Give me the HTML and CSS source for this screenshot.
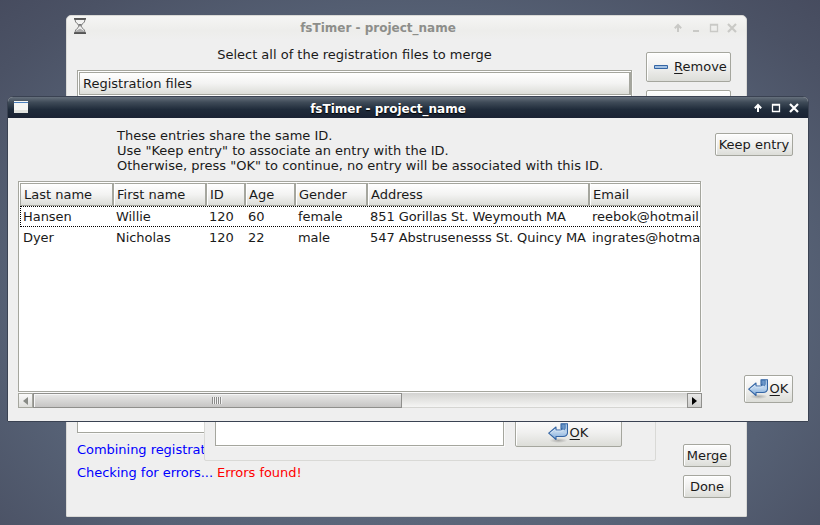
FILE: index.html
```html
<!DOCTYPE html>
<html lang="en">
<head>
<meta charset="utf-8">
<title>fsTimer - project_name</title>
<link rel="stylesheet" href="styles.css">
</head>
<body>
<svg width="0" height="0" class="defs">
  <defs>
    <linearGradient id="blue" x1="0" y1="0" x2="0" y2="1"><stop offset="0" stop-color="#a9c6e6"/><stop offset=".55" stop-color="#b9d2ec"/><stop offset="1" stop-color="#7ba7d8"/></linearGradient>
    <radialGradient id="shade"><stop offset="0" stop-color="#000" stop-opacity=".25"/><stop offset="1" stop-color="#000" stop-opacity="0"/></radialGradient>
    <symbol id="enter" viewBox="0 0 20 20">
      <ellipse cx="10.500" cy="17.500" rx="9" ry="2.500" fill="url(#shade)"/>
      <path d="M13 .8h6.500v8.700q0 4-4.500 4H8v3L.7 10.200 8 4v3h4.500q1.500 0 1.500-1.500H13z" fill="url(#blue)" stroke="#3465a4" stroke-width="1.100" stroke-linejoin="round"/>
      <path d="M13.500 1.300h3.700v3.700q0 1-.8 1.700l-2.400-.8z" fill="#6d98ca" stroke="#3465a4" stroke-width=".7"/>
      <path d="M2.500 10.200L7 6.300v1.800h6q2 0 3-1.300" fill="none" stroke="#dceaf8" stroke-width=".8"/>
    </symbol>
  </defs>
</svg>

<main class="desktop">
  <section class="window merge-window">
    <header class="titlebar">
      <svg class="app-icon" width="14" height="16" viewBox="0 0 14 16"><path d="M2 1.500c0 4 4 4.500 4 6.500s-4 2.500-4 6.500h10c0-4-4-4.500-4-6.500s4-2.500 4-6.500z" fill="#f2f2f1" stroke="#777"/><path d="M2.500 14c1-2.500 3-2 4.500-3.500 1.500 1.500 3.500 1 4.500 3.500z" fill="#aaa"/><path d="M5 6h4L7 8.500z" fill="#777"/><path d="M1 .9h12M1 15.100h12" stroke="#555" stroke-width="1.600"/></svg>
      <h1 class="title">fsTimer - project_name</h1>
      <svg class="controls" width="64" height="10" viewBox="0 0 64 10"><path d="M4 9V2M.8 5.300L4 2l3.200 3.300" fill="none" stroke="currentColor" stroke-width="2"/><path d="M19 7h6v2h-6z" fill="currentColor"/><path d="M36.500 1.500h7v7h-7zM36 2h8" fill="none" stroke="currentColor" stroke-width="1.300"/><path d="M54 1l8 8M62 1l-8 8" stroke="currentColor" stroke-width="2.200"/></svg>
    </header>
    <div class="merge-body">
      <div class="merge-main">
        <p class="prompt">Select all of the registration files to merge</p>
        <div class="list files"><div class="list-head">Registration files</div></div>
      </div>
      <div class="side">
        <button class="btn remove"><svg width="14" height="4" viewBox="0 0 14 4"><path d="M.5.5h13v3H.5z" fill="#a3c1e3" stroke="#3465a4"/></svg><span><u>R</u>emove</span></button>
        <button class="btn blank" aria-hidden="true"></button>
        <button class="btn merge">Merge</button>
        <button class="btn done">Done</button>
      </div>
    </div>
    <div class="log">
      <p>Combining registrat</p>
      <p>Checking for errors... <span class="error">Errors found!</span></p>
    </div>
  </section>

  <section class="window info-window">
    <div class="list info"></div>
    <button class="btn"><svg width="20" height="20"><use href="#enter"/></svg><span><u>O</u>K</span></button>
  </section>

  <section class="window entry-window">
    <header class="titlebar">
      <svg class="app-icon" width="14" height="12" viewBox="0 0 14 12"><path d="M0 0h14v12H0z" fill="#f4f4f2"/><path d="M0 1h14v1H0z" fill="#4a7fbd"/><path d="M0 9h14v3H0z" fill="#e1e3df"/></svg>
      <h1 class="title">fsTimer - project_name</h1>
      <svg class="controls" width="46" height="10" viewBox="0 0 46 10"><path d="M4 9V2M.8 5.300L4 2l3.200 3.300" fill="none" stroke="currentColor" stroke-width="2"/><path d="M18.500 1.500h7v7h-7zM18 2h8" fill="none" stroke="currentColor" stroke-width="1.300"/><path d="M36 1l8 8M44 1l-8 8" stroke="currentColor" stroke-width="2.200"/></svg>
    </header>
    <div class="entry-body">
      <div class="entry-main">
        <p class="message">These entries share the same ID.<br>Use "Keep entry" to associate an entry with the ID.<br>Otherwise, press "OK" to continue, no entry will be associated with this ID.</p>
        <div class="list entries">
          <div class="row head"><span>Last name</span><span>First name</span><span>ID</span><span>Age</span><span>Gender</span><span>Address</span><span>Email</span></div>
          <div class="row focused"><span>Hansen</span><span>Willie</span><span>120</span><span>60</span><span>female</span><span>851 Gorillas St. Weymouth MA</span><span>reebok@hotmail</span></div>
          <div class="row"><span>Dyer</span><span>Nicholas</span><span>120</span><span>22</span><span>male</span><span>547 Abstrusenesss St. Quincy MA</span><span>ingrates@hotma</span></div>
        </div>
        <div class="scrollbar">
          <div class="step"><svg width="5" height="8" viewBox="0 0 5 8"><path d="M5 0v8L0 4z" fill="#888a85"/></svg></div>
          <div class="thumb"><i></i></div>
          <div class="step end"><svg width="5" height="8" viewBox="0 0 5 8"><path d="M0 0v8l5-4z" fill="#000"/></svg></div>
        </div>
      </div>
      <div class="entry-side">
        <button class="btn keep">Keep entry</button>
        <button class="btn ok"><svg width="20" height="20"><use href="#enter"/></svg><span><u>O</u>K</span></button>
      </div>
    </div>
  </section>
</main>
</body>
</html>
```

FILE: styles.css
```css
* { box-sizing: border-box; }
body { margin: 0; font: 13px/15px "DejaVu Sans", sans-serif; color: #1a1a1a; }
p, h1 { margin: 0; }
svg { display: block; flex: none; }
.defs { position: absolute; }

.desktop {
  position: relative;
  width: 820px;
  height: 525px;
  overflow: hidden;
  background: radial-gradient(ellipse 600px 430px at 50% 58%, #667387 0%, #5f6a7e 35%, #566175 65%, #4b5265 87%, #404356 115%);
}
.window { position: absolute; background: #efefef; border: 1px solid #d9d9d6; }
.titlebar { display: flex; align-items: center; }
.title { flex: 1; text-align: center; font-size: 12px; line-height: 15px; font-weight: bold; }

.btn {
  display: flex;
  align-items: center;
  justify-content: center;
  padding: 0;
  font: inherit;
  color: inherit;
  white-space: nowrap;
  border: 1px solid #a5a69e;
  border-radius: 2px;
  background: linear-gradient(#fdfdfd, #f0f0ef 50%, #dcddd8);
  box-shadow: inset 1px 1px #fff;
}
u { text-underline-offset: 2px; text-decoration-thickness: 1px; text-decoration-skip-ink: none; }
.list { background: #fff; border: 1px solid #a5a69e; box-shadow: 1px 1px #fafafa; overflow: hidden; }

.merge-window { left: 66px; top: 15px; width: 681px; height: 502px; border-radius: 5px 5px 1px 1px; }
.merge-window .titlebar { height: 24px; padding: 0 8px 0 6px; color: #8d8e8a; background: linear-gradient(#f5f5f4, #ededeb 60%, #efefef); border-radius: 5px 5px 0 0; }
.merge-window .app-icon { margin-top: -4px; }
.merge-window .title { padding-right: 5px; }
.merge-window .controls { color: #c9c9c6; }
.merge-body { display: flex; justify-content: space-between; padding: 0 15px 0 10px; height: 393px; }
.merge-main { width: 555px; }
.prompt { text-align: center; padding-top: 7px; height: 30px; }
.files { height: 363px; padding: 1px 0 0 1px; }
.list-head { height: 23px; padding: 3px; border: 1px solid #a5a69e; border-right-width: 2px; background: linear-gradient(#fff, #f3f3f2 50%, #dcddd8); }
.side { width: 85px; padding-top: 12px; display: flex; flex-direction: column; align-items: flex-end; }
.side .btn { flex: none; }
.remove { width: 85px; height: 30px; gap: 6px; padding-left: 4px; }
.remove span { margin-top: -2px; }
.blank { width: 85px; height: 30px; margin-top: 8px; }
.merge { width: 48px; height: 23px; margin-top: 324px; }
.done { width: 48px; height: 23px; margin-top: 8px; }
.log { padding: 9px 10px; color: #00f; letter-spacing: -.04px; }
.log p + p { margin-top: 8px; }
.error { color: #f00; }

.info-window { left: 204px; top: 300px; width: 452px; height: 161px; display: flex; align-items: flex-end; gap: 11px; padding: 0 33px 13px 10px; border-radius: 0 0 2px 2px; }
.info { width: 289px; height: 100px; margin-bottom: 1px; }
.info-window .btn { width: 107px; height: 29px; gap: 2px; padding-right: 1px; }

.entry-window { left: 7px; top: 96px; width: 802px; height: 326px; border-color: #3a4252; border-radius: 6px 6px 1px 1px; }
.entry-window .titlebar { height: 21px; padding: 0 8px 0 6px; color: #fff; background: linear-gradient(#66707c, #3f4b58 25%, #1f2b3a 60%, #1a2233); border-radius: 5px 5px 0 0; }
.entry-window .app-icon { margin-top: -1px; }
.entry-window .title { padding-right: 6px; padding-top: 3px; text-shadow: 0 1px 1px #000; }
.entry-window .controls { margin-top: 1px; }
.entry-body { display: flex; justify-content: space-between; padding: 0 15px 0 10px; height: 303px; }
.entry-main { width: 684px; }
.message { padding: 10px 0 0 99px; height: 63px; white-space: nowrap; }
.entries { width: 683px; height: 211px; padding: 1px 0 0 1px; }
.row { display: grid; grid-template-columns: 93px 93px 39px 50px 72px 222px 1fr; height: 21px; white-space: nowrap; letter-spacing: -.04px; }
.row span { padding: 3px 0 0 3px; overflow: hidden; }
.row:not(.head) span:nth-child(6) { letter-spacing: -.07px; }
.row:not(.head) span:last-child { letter-spacing: 0; }
.head { height: 23px; grid-template-columns: 94px 93px 39px 50px 72px 222px 1fr; letter-spacing: 0; }
.head span { padding: 3px 0 0 2px; border: 1px solid #a5a69e; border-right-width: 2px; background: linear-gradient(#fff, #f3f3f2 50%, #dcddd8); border-left-color: #fff; }
.head span:first-child { padding-left: 3px; border-left-color: #a5a69e; }
.head span:last-child { border-right: 0; }
.focused { outline: 1px dotted #000; outline-offset: -1px; margin-right: -2px; }
.scrollbar { display: flex; height: 15px; margin-top: 1px; border-bottom: 1px solid #d5d5d2; background: linear-gradient(#d3d3d1, #f5f5f4); }
.step { width: 15px; height: 15px; display: flex; align-items: center; justify-content: center; border: 1px solid #a5a69e; background: linear-gradient(#fafafa, #dededb); }
.thumb { width: 369px; height: 15px; display: flex; align-items: center; justify-content: center; border: 1px solid #8f8f8c; background: linear-gradient(#e8e8e7, #c6c5c4); box-shadow: inset 1px 1px #f6f6f6; }
.thumb i { width: 10px; height: 7px; margin-right: 2px; background: repeating-linear-gradient(90deg, #8b8b89 0 1px, #f2f2f2 1px 2px); }
.end { margin-left: auto; border-color: #8f8f8c; background: linear-gradient(#e8e8e7, #cfcfcd); }
.entry-side { width: 78px; padding-top: 15px; display: flex; flex-direction: column; align-items: flex-end; }
.keep { width: 78px; height: 23px; }
.ok { width: 49px; height: 28px; margin-top: 219px; gap: 2px; padding-right: 1px; }
.ok span, .info-window .btn span { margin-top: -1px; }
```
